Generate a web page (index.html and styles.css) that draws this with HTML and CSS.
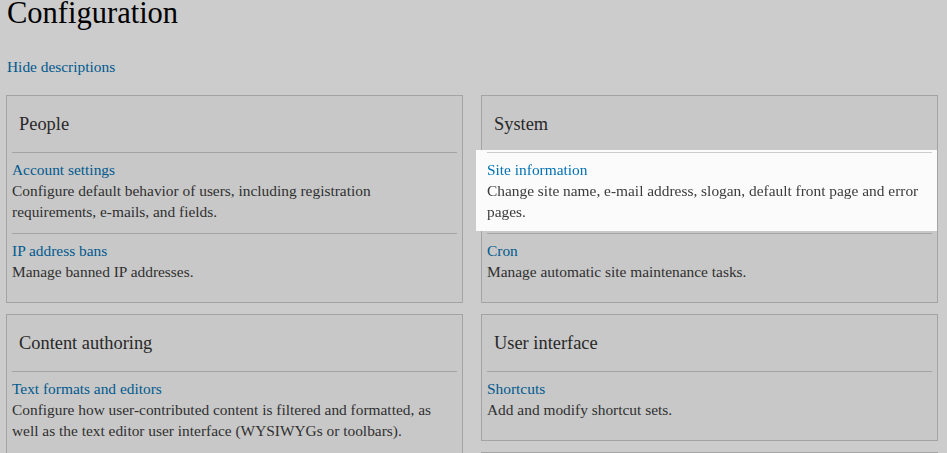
FILE: index.html
```html
<!DOCTYPE html>
<html lang="en">
<head>
<meta charset="utf-8">
<title>Configuration</title>
<link rel="stylesheet" href="styles.css">
</head>
<body>
<main class="page">
  <h1 class="page-title">Configuration</h1>
  <p class="compact-link"><a href="#">Hide descriptions</a></p>
  <div class="layout">
    <div class="column">
      <section class="panel">
        <h3 class="panel-title">People</h3>
        <dl class="admin-list">
          <div class="admin-item">
            <dt><a href="#">Account settings</a></dt>
            <dd>Configure default behavior of users, including registration requirements, e-mails, and fields.</dd>
          </div>
          <div class="admin-item">
            <dt><a href="#">IP address bans</a></dt>
            <dd>Manage banned IP addresses.</dd>
          </div>
        </dl>
      </section>
      <section class="panel">
        <h3 class="panel-title">Content authoring</h3>
        <dl class="admin-list">
          <div class="admin-item">
            <dt><a href="#">Text formats and editors</a></dt>
            <dd>Configure how user-contributed content is filtered and formatted, as well as the text editor user interface (WYSIWYGs or toolbars).</dd>
          </div>
        </dl>
      </section>
    </div>
    <div class="column">
      <section class="panel">
        <h3 class="panel-title">System</h3>
        <dl class="admin-list">
          <div class="admin-item is-highlighted">
            <dt><a href="#">Site information</a></dt>
            <dd>Change site name, e-mail address, slogan, default front page and error pages.</dd>
          </div>
          <div class="admin-item">
            <dt><a href="#">Cron</a></dt>
            <dd>Manage automatic site maintenance tasks.</dd>
          </div>
        </dl>
      </section>
      <section class="panel">
        <h3 class="panel-title">User interface</h3>
        <dl class="admin-list">
          <div class="admin-item">
            <dt><a href="#">Shortcuts</a></dt>
            <dd>Add and modify shortcut sets.</dd>
          </div>
        </dl>
      </section>
      <section class="panel">
        <h3 class="panel-title">Development</h3>
        <dl class="admin-list">
          <div class="admin-item">
            <dt><a href="#">Performance</a></dt>
            <dd>Enable or disable page caching for anonymous users and set CSS and JS bandwidth optimization options.</dd>
          </div>
        </dl>
      </section>
    </div>
  </div>
</main>
<div class="tour-overlay"></div>
</body>
</html>
```
FILE: styles.css
```css
html, body {
  margin: 0;
  padding: 0;
}
body {
  background: #ffffff;
  color: #3b3b3b;
  font-family: "Liberation Serif", "Times New Roman", serif;
  font-size: 15.4px;
  line-height: 21px;
}
a {
  color: #0071b3;
  text-decoration: none;
}
.page {
  padding: 0 9px 0 6px;
}
.page-title {
  margin: 0;
  font-size: 30.5px;
  font-weight: normal;
  line-height: 26px;
  color: #000000;
  padding-left: 1px;
}
.compact-link {
  margin: 30px 0 0 1px;
}
.layout {
  display: grid;
  grid-template-columns: 457px 457px;
  column-gap: 18px;
  margin-top: 18px;
  align-items: start;
}
.column {
  display: flex;
  flex-direction: column;
  gap: 11px;
}
.panel {
  border: 1px solid #cccccc;
  background: #fbfbfb;
  padding: 0 5px 9px;
}
.panel-title {
  margin: 0;
  padding: 17px 7px 16px;
  font-size: 18.4px;
  font-weight: normal;
  line-height: 23px;
  color: #333333;
}
.admin-list {
  margin: 0;
}
.admin-item {
  border-top: 1px solid #cccccc;
  padding: 6px 0 11px;
}
.admin-item dt,
.admin-item dd {
  margin: 0;
}
.admin-item.is-highlighted {
  position: relative;
  z-index: 20;
  background: #fbfbfb;
  padding-bottom: 9px;
  margin-bottom: 2px;
  box-shadow: -11px -2px 0 #fbfbfb, 5px -2px 0 #fbfbfb, -11px 0 0 #fbfbfb, 5px 0 0 #fbfbfb;
}
.tour-overlay {
  position: fixed;
  inset: 0;
  background: rgba(0, 0, 0, 0.2);
  z-index: 10;
}
```
